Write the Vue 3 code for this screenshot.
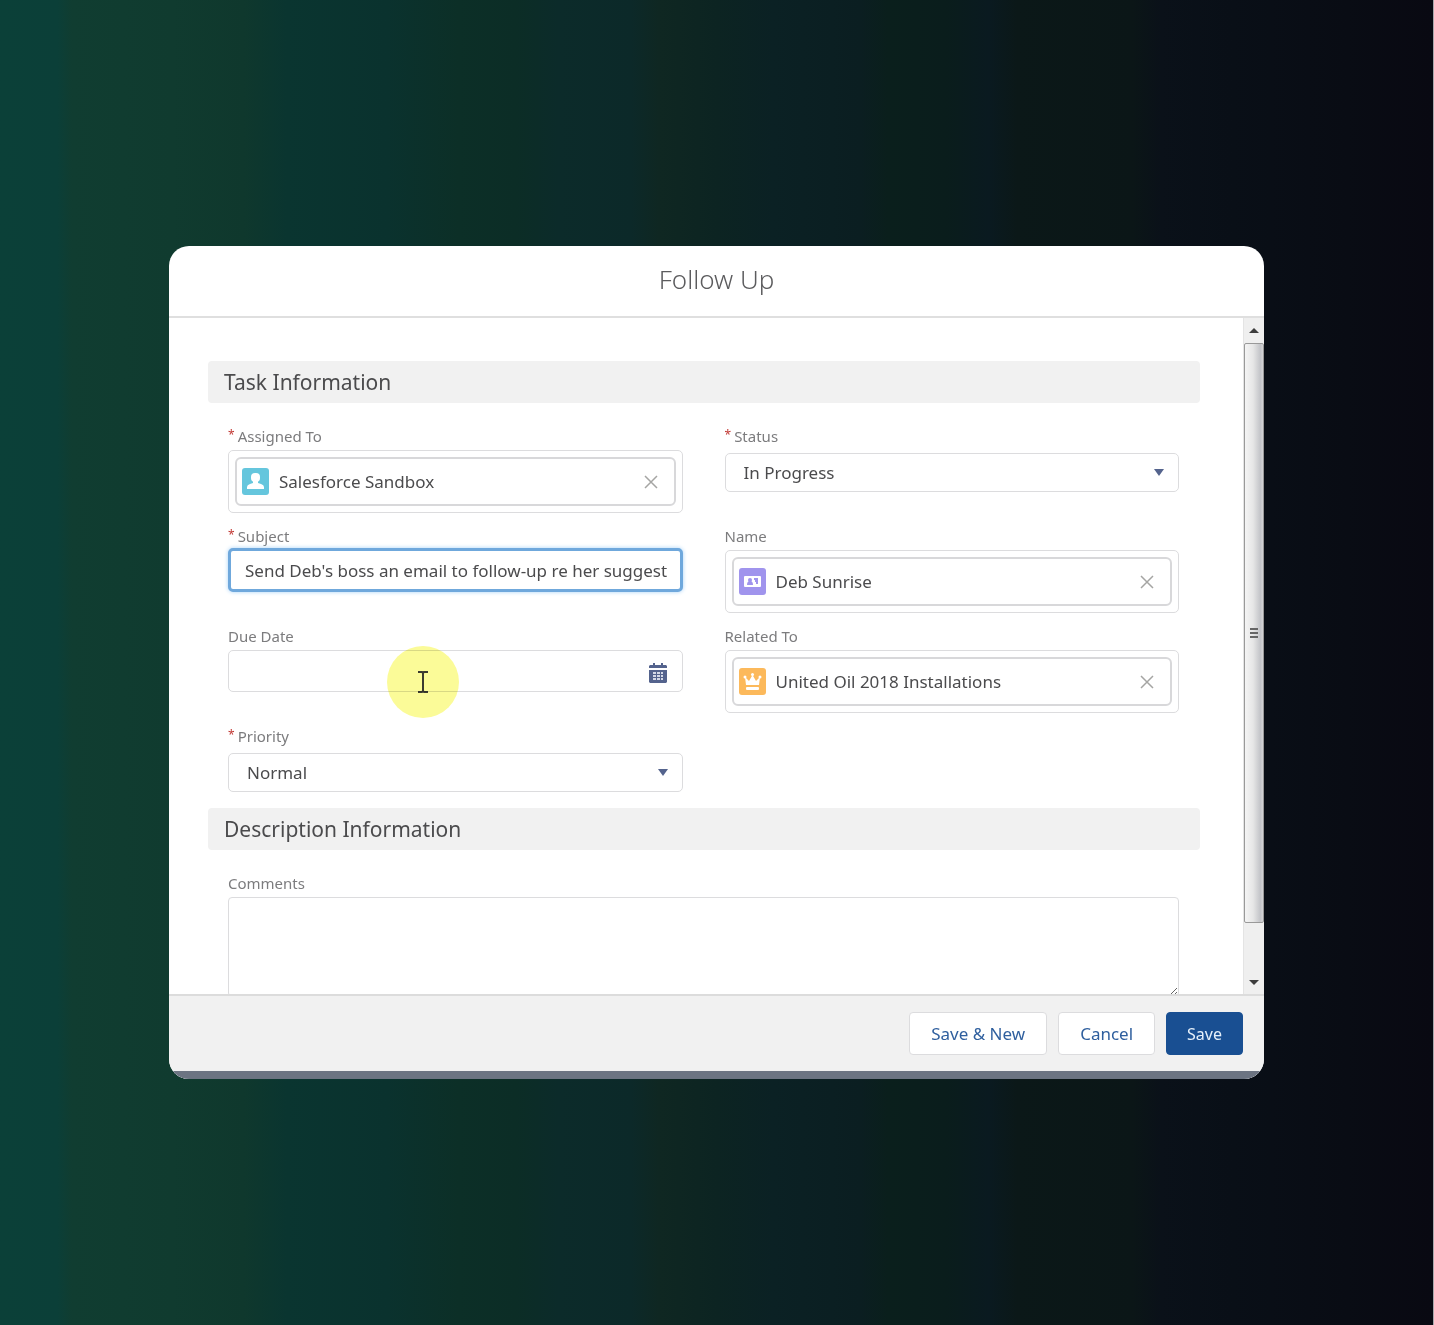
<script setup>
import { ref } from 'vue'

const status = ref('In Progress')
const priority = ref('Normal')
const subject = ref("Send Deb's boss an email to follow-up re her suggest")
const dueDate = ref('')
const comments = ref('')
const assignedTo = ref('Salesforce Sandbox')
const contact = ref('Deb Sunrise')
const relatedTo = ref('United Oil 2018 Installations')
</script>

<template>
  <main class="page">
    <form class="modal" role="dialog" aria-labelledby="modal-title" @submit.prevent>
      <header class="modal-header">
        <h1 id="modal-title">Follow Up</h1>
      </header>

      <div class="modal-body">
        <div class="content">
          <h2 class="section-title">Task Information</h2>

          <div class="fields">
            <div class="field">
              <label for="assigned"><span class="req">*</span>Assigned To</label>
              <div class="lookup">
                <div class="pill">
                  <svg class="entity user" viewBox="0 0 27 27" aria-hidden="true">
                    <rect x="9" y="5" width="9" height="9" rx="4" />
                    <path d="M11 12h5v4h-5z" />
                    <path d="M5 21v-2q0-2 3-3l3-1h5l3 1q3 1 3 3v2z" />
                  </svg>
                  <input id="assigned" v-model="assignedTo" readonly />
                  <button type="button" class="remove" aria-label="Remove">
                    <svg viewBox="0 0 14 14"><path d="M1 1l12 12M13 1L1 13" /></svg>
                  </button>
                </div>
              </div>
            </div>

            <div class="field choice">
              <label for="status"><span class="req">*</span>Status</label>
              <div class="select">
                <select id="status" v-model="status">
                  <option>In Progress</option>
                  <option>Completed</option>
                </select>
              </div>
            </div>

            <div class="field active">
              <label for="subject"><span class="req">*</span>Subject</label>
              <input id="subject" v-model="subject" class="text focused" type="text" />
            </div>

            <div class="field">
              <label for="contact">Name</label>
              <div class="lookup">
                <div class="pill">
                  <svg class="entity contact" viewBox="0 0 27 27" aria-hidden="true">
                    <rect x="5" y="8" width="17" height="11" rx="1" />
                    <g class="cut">
                      <circle cx="11" cy="12" r="2" />
                      <path d="M8 17q0-4 3-4t3 4z" />
                      <path d="M15 10h4v2h-1v2h-2v-2h-1z" />
                      <path d="M17 12h2v4h-2z" />
                    </g>
                  </svg>
                  <input id="contact" v-model="contact" readonly />
                  <button type="button" class="remove" aria-label="Remove">
                    <svg viewBox="0 0 14 14"><path d="M1 1l12 12M13 1L1 13" /></svg>
                  </button>
                </div>
              </div>
            </div>

            <div class="field">
              <label for="due">Due Date</label>
              <div class="date">
                <input id="due" v-model="dueDate" class="text" type="text" />
                <button type="button" class="calendar" aria-label="Pick a date">
                  <svg viewBox="0 0 18 20">
                    <path d="M4 0h2v2h6V0h2v2h3l1 1v2H0V3l1-1h3z" />
                    <path d="M0 7h18v12l-1 1H1l-1-1z" />
                    <path class="grid" d="M4 9h3v2H4zM8 9h3v2H8zM12 9h2v2h-2zM4 12h3v2H4zM8 12h3v2H8zM12 12h2v2h-2zM4 15h3v2H4zM8 15h3v2H8zM12 15h2v2h-2z" />
                  </svg>
                </button>
                <svg class="pointer" viewBox="0 0 72 72" aria-hidden="true">
                  <circle cx="36" cy="36" r="36" />
                  <path d="M31 26h4l1 1 1-1h4M36 26v20M31 46h4l1-1 1 1h4" />
                </svg>
              </div>
            </div>

            <div class="field">
              <label for="related">Related To</label>
              <div class="lookup">
                <div class="pill">
                  <svg class="entity opportunity" viewBox="0 0 27 27" aria-hidden="true">
                    <path d="M7 17L6 9l4 4 3.500-6 3.500 6 4-4-1 8z" />
                    <circle cx="6" cy="9" r="1.500" />
                    <circle cx="21" cy="9" r="1.500" />
                    <circle cx="13.500" cy="6.500" r="1.500" />
                    <rect x="7" y="19" width="13" height="3" rx="1" />
                  </svg>
                  <input id="related" v-model="relatedTo" readonly />
                  <button type="button" class="remove" aria-label="Remove">
                    <svg viewBox="0 0 14 14"><path d="M1 1l12 12M13 1L1 13" /></svg>
                  </button>
                </div>
              </div>
            </div>

            <div class="field choice">
              <label for="priority"><span class="req">*</span>Priority</label>
              <div class="select">
                <select id="priority" v-model="priority">
                  <option>High</option>
                  <option>Normal</option>
                  <option>Low</option>
                </select>
              </div>
            </div>
          </div>

          <h2 class="section-title">Description Information</h2>

          <div class="field comments">
            <label for="comments">Comments</label>
            <textarea id="comments" v-model="comments"></textarea>
          </div>
        </div>

        <div class="scrollbar" aria-hidden="true">
          <svg class="arrow" viewBox="0 0 10 5"><path d="M0 5l5-5 5 5z" /></svg>
          <div class="thumb"><i></i><i></i><i></i></div>
          <svg class="arrow" viewBox="0 0 10 5"><path d="M0 0h10L5 5z" /></svg>
        </div>
      </div>

      <footer class="modal-footer">
        <button type="button" class="btn">Save &amp; New</button>
        <button type="button" class="btn">Cancel</button>
        <button type="submit" class="btn primary">Save</button>
      </footer>
    </form>
  </main>
</template>

<style>
body {
  margin: 0;
}
</style>

<style scoped>
* {
  box-sizing: border-box;
}

.page {
  display: flex;
  height: 100vh;
  min-height: 900px;
  padding: 246px 169px;
  font-family: "Noto Sans", sans-serif;
  color: #4b4b4d;
  background: linear-gradient(
    90deg,
    #0b4038 0, #0b3f38 4%, #103d31 5%, #103b2f 12%, #0f382d 17%,
    #0a3530 20%, #0a322e 27%, #0c2f27 32%, #0c2d26 36%, #0c2b2a 39%,
    #0c2929 44%, #0f2722 46%, #0c2422 50%, #0b2124 54%, #0b1e21 60%,
    #0a1f1c 62%, #0a1d1c 66%, #0a1a20 69%, #0b1818 71%, #0b1617 79%,
    #0a1119 81%, #090f17 86%, #090c14 94%, #090912 100%
  );
  border-right: 1px solid #a8a8ac;
}

.modal {
  display: flex;
  flex: 1;
  flex-direction: column;
  min-width: 0;
  overflow: hidden;
  background: #fff;
  border-radius: 20px;
}

.modal-header {
  padding: 15px 0 19px;
  border-bottom: 2px solid #dfdfdf;
}

h1 {
  margin: 0;
  font-size: 26px;
  font-weight: 300;
  line-height: 36px;
  text-align: center;
  color: #5c5c5e;
}

.modal-body {
  display: flex;
  flex: 1;
  min-height: 0;
}

.content {
  flex: 1;
  min-width: 0;
  padding: 43px 43px 0 39px;
  overflow: hidden;
}

.section-title {
  margin: 0 0 24px;
  padding: 0 16px;
  font-size: 21px;
  font-weight: 400;
  line-height: 42px;
  background: #f1f1f1;
  border-radius: 4px;
}

.fields {
  display: grid;
  grid-template-columns: 1fr 1fr;
  grid-template-rows: 100px 100px 100px auto;
  column-gap: 42px;
  margin: 0 21px 16px 20px;
}

.field {
  display: flex;
  flex-direction: column;
  gap: 5px;
  min-width: 0;
}

.field.choice {
  gap: 8px;
}

.field.active {
  gap: 3px;
}

.field.comments {
  margin: 0 21px 0 20px;
}

label {
  font-size: 15px;
  line-height: 18px;
  color: #7c7c7e;
}

.req {
  margin-right: 3px;
  font-size: 12px;
  line-height: 12px;
  vertical-align: 3px;
  color: #c23934;
}

input,
select,
textarea,
button {
  font: inherit;
  color: inherit;
}

.lookup {
  height: 63px;
  padding: 6px;
  border: 1px solid #dcdcde;
  border-radius: 5px;
}

.pill {
  display: flex;
  align-items: center;
  height: 49px;
  padding: 0 16px 0 5px;
  border: 2px solid #d8d8da;
  border-radius: 6px;
}

.pill input {
  flex: 1;
  min-width: 0;
  padding: 0 0 0 10px;
  font-size: 17px;
  background: none;
  border: 0;
}

.entity {
  width: 27px;
  height: 27px;
  fill: #fff;
  border-radius: 3px;
}

.user {
  background: #65c6dd;
}

.contact {
  background: #a094ed;
}

.contact .cut {
  fill: #a094ed;
}

.opportunity {
  background: #fcb95b;
}

.remove,
.calendar {
  display: flex;
  padding: 0;
  background: none;
  border: 0;
}

.remove svg {
  width: 14px;
  height: 14px;
  stroke: #a5a5a3;
  stroke-width: 1.5;
}

.select {
  position: relative;
}

.select::after {
  position: absolute;
  top: 16px;
  right: 15px;
  border: 5px solid transparent;
  border-top: 7px solid #54638d;
  border-bottom: 0;
  content: "";
}

select {
  display: block;
  width: 100%;
  height: 39px;
  padding: 0 18px;
  font-size: 17px;
  appearance: none;
  background: #fff;
  border: 1px solid #dcdcde;
  border-radius: 5px;
}

.text {
  width: 100%;
  height: 42px;
  padding: 0 16px;
  font-size: 17px;
  background: #fff;
  border: 1px solid #dcdcde;
  border-radius: 5px;
}

.text.focused {
  height: 44px;
  padding: 0 8px 0 14px;
  border: 3px solid #6fa8dc;
  outline: 0;
  box-shadow: 0 0 4px #a9d3f7;
}

.date {
  position: relative;
}

.date .text {
  display: block;
}

.calendar {
  position: absolute;
  top: 13px;
  right: 16px;
}

.calendar svg {
  width: 18px;
  height: 20px;
  fill: #54638d;
}

.calendar .grid {
  fill: #d3d8e6;
}

.pointer {
  position: absolute;
  top: -4px;
  left: 35%;
  width: 72px;
  height: 72px;
  mix-blend-mode: multiply;
  pointer-events: none;
}

.pointer circle {
  fill: #fbfb98;
}

.pointer path {
  fill: none;
  stroke: #3b3b30;
  stroke-width: 2;
}

textarea {
  height: 100px;
  padding: 8px 16px;
  font-size: 17px;
  background: #fff;
  border: 1px solid #dcdcde;
  border-radius: 4px;
}

.scrollbar {
  display: flex;
  flex-direction: column;
  align-items: center;
  width: 21px;
  padding: 10px 0 9px;
  background: #efefef;
  border-left: 1px solid #e4e4e4;
}

.arrow {
  width: 10px;
  height: 5px;
  fill: #3c3c3c;
}

.thumb {
  display: flex;
  flex: 1;
  flex-direction: column;
  gap: 2px;
  align-items: center;
  justify-content: center;
  width: 20px;
  margin: 10px 0 57px;
  background: linear-gradient(90deg, #f4f4f4, #e6e6e6 45%, #c3c4c8 85%, #d4d4d6);
  border: 1px solid #999;
  border-radius: 2px;
}

.thumb i {
  width: 8px;
  height: 2px;
  background: #666;
}

.modal-footer {
  display: flex;
  gap: 11px;
  justify-content: flex-end;
  padding: 16px 21px 16px;
  background: #f1f1f1;
  border-top: 2px solid #dcdcdc;
  border-bottom: 8px solid #6c7482;
}

.btn {
  height: 43px;
  padding: 0 21px;
  font-size: 17px;
  color: #2f5f9e;
  background: #fff;
  border: 1px solid #dcdcde;
  border-radius: 4px;
}

.btn.primary {
  padding: 0 20px;
  font-size: 16px;
  color: #e6f0fa;
  background: #194f92;
  border-color: #194f92;
}
</style>
